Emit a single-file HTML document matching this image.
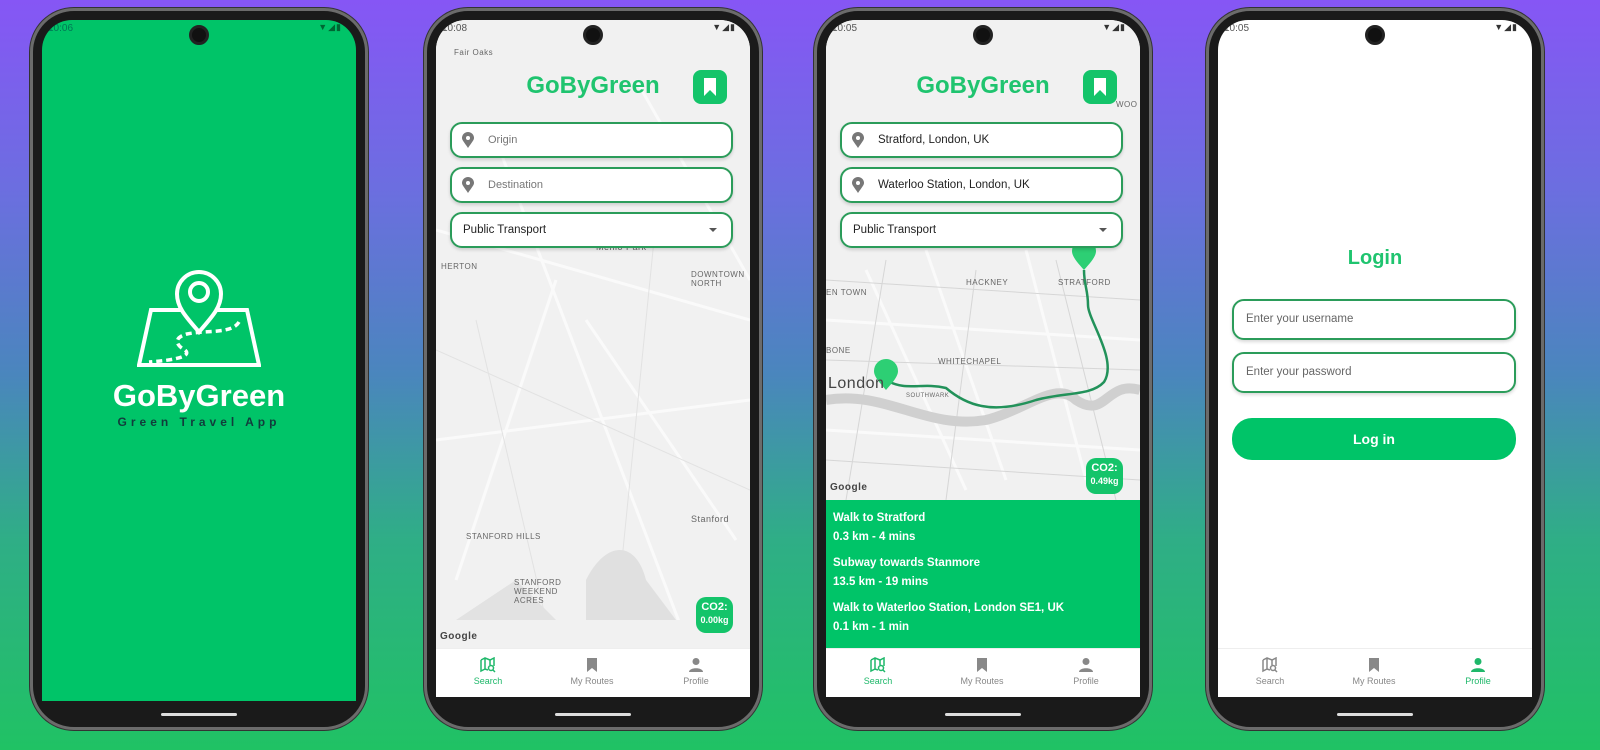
<!DOCTYPE html><html><head><style>
*{margin:0;padding:0;box-sizing:border-box}
body{width:1600px;height:750px;overflow:hidden;position:relative;font-family:"Liberation Sans",sans-serif;background:linear-gradient(180deg,#8656f5 0%,#6c6ee0 25%,#4a86bd 50%,#2fae86 72%,#20c264 100%)}
.a{position:absolute}
.phone{position:absolute;top:8px;width:338px;height:722px;border-radius:44px;background:#1a1a1a;border:3px solid #6b6b6b;box-shadow:0 0 0 1px #333}
.scr{position:absolute;left:9px;top:9px;right:9px;bottom:30px;border-radius:30px 30px 0 0;overflow:hidden;background:#fff}
.cam{position:absolute;top:14px;left:50%;margin-left:-10px;width:20px;height:20px;border-radius:50%;background:#111;border:3px solid #222}
.home{position:absolute;bottom:11px;left:50%;margin-left:-38px;width:76px;height:3px;border-radius:2px;background:#ddd}
.sb{position:absolute;top:3px;left:6px;font-size:10px;color:#555}
.sbr{position:absolute;top:2px;right:14px;font-size:9px;color:#333;letter-spacing:1px}
.title{position:absolute;left:0;right:0;text-align:center;color:#1fc46f;font-weight:bold;font-size:24px}
.bm{position:absolute;width:34px;height:34px;border-radius:8px;background:#14c46a}
.inp{position:absolute;left:14px;width:283px;height:36px;border:2px solid #2b9c5a;border-radius:12px;background:#fff;font-size:11px;color:#777;padding-left:36px;line-height:32px;box-shadow:0 2px 3px rgba(0,0,0,.15)}
.inp.d{color:#222;padding-left:11px;font-size:11.5px}
.pin{position:absolute;left:10px;top:8px;width:12px;height:16px}
.caret{position:absolute;right:14px;top:14px;border:4px solid transparent;border-top:4px solid #555}
.nav{position:absolute;left:0;right:0;bottom:0;height:49px;background:#fff;border-top:1px solid #eee}
.ni{position:absolute;top:8px;width:80px;text-align:center;font-size:9px;color:#888}
.ni svg{display:block;margin:0 auto 3px}
.co2{position:absolute;width:37px;height:36px;border-radius:10px;background:#14c46a;color:#fff;font-weight:bold;text-align:center;font-size:11px;line-height:13px;padding-top:4px}
.co2 small{font-size:9px}
.map{position:absolute;left:0;right:0;top:0;bottom:49px;background:#f1f1f1}
.ml{position:absolute;font-size:8px;color:#666;letter-spacing:.5px}
.gp{position:absolute;left:0;right:0;height:148px;bottom:49px;background:#00c468;color:#fff;font-weight:bold;font-size:11.5px;padding:9px 7px;line-height:19px}
</style></head><body>

<!-- Phone 1 -->
<div class="phone" style="left:30px">
 <div class="scr" style="background:#00c468;bottom:26px">
  <div class="sb" style="color:#075">10:06</div><div class="sbr" style="color:#063">▼◢▮</div>
  <svg class="a" style="left:95px;top:250px" width="124" height="100" viewBox="0 0 124 100">
   <path d="M14 40 L110 40 L122 95 L2 95 Z" fill="none" stroke="#fff" stroke-width="4"/>
   <path d="M62 62 C50 48 40 38 40 24 A22 22 0 0 1 84 24 C84 38 74 48 62 62Z" fill="#00c468" stroke="#fff" stroke-width="4"/>
   <circle cx="62" cy="22" r="9" fill="none" stroke="#fff" stroke-width="4"/>
   <path d="M102 52 C95 64 70 60 50 64 C35 68 40 76 48 80 C55 86 40 90 12 92" fill="none" stroke="#fff" stroke-width="3.5" stroke-dasharray="6 4"/>
  </svg>
  <div class="a" style="left:0;right:0;top:358px;text-align:center;color:#fff;font-weight:bold;font-size:31px">GoByGreen</div>
  <div class="a" style="left:0;right:0;top:395px;text-align:center;color:#123c3c;font-weight:bold;font-size:12px;letter-spacing:4px">Green Travel App</div>
 </div>
 <div class="cam"></div><div class="home"></div>
</div>

<!-- Phone 2 -->
<div class="phone" style="left:424px">
 <div class="scr">
  <div class="map">
   <svg class="a" style="left:0;top:0" width="314" height="600">
    <g stroke="#fafafa" stroke-width="3" fill="none"><path d="M0 210 L314 300"/><path d="M60 120 L250 620"/><path d="M200 60 L314 260"/><path d="M0 420 L314 380"/><path d="M120 260 L20 560"/><path d="M150 300 L300 520"/></g>
    <g stroke="#e2e2e2" stroke-width="1" fill="none"><path d="M0 330 L314 470"/><path d="M40 300 L110 600"/><path d="M220 200 L180 600"/></g>
    <path d="M150 560 C170 520 200 520 210 560 L240 600 L150 600 Z" fill="#e0e0e0"/>
    <path d="M20 600 L80 560 L120 600 Z" fill="#e2e2e2"/>
   </svg>
   <div class="ml" style="left:18px;top:28px">Fair Oaks</div>
   <div class="ml" style="left:160px;top:222px;font-size:9px">Menlo Park</div>
   <div class="ml" style="left:5px;top:242px">HERTON</div>
   <div class="ml" style="left:255px;top:250px">DOWNTOWN<br>NORTH</div>
   <div class="ml" style="left:30px;top:512px">STANFORD HILLS</div>
   <div class="ml" style="left:78px;top:558px">STANFORD<br>WEEKEND<br>ACRES</div>
   <div class="ml" style="left:255px;top:494px;font-size:9px">Stanford</div>
   <div class="ml" style="left:4px;top:611px;font-weight:bold;font-size:10px;color:#444">Google</div>
  </div>
  <div class="sb">10:08</div><div class="sbr">▼◢▮</div>
  <div class="title" style="top:52px">GoByGreen</div>
  <div class="bm" style="left:257px;top:50px"><svg width="34" height="34"><path d="M11 8 H23 V26 L17 20 L11 26Z" fill="#fff"/></svg></div>
  <div class="inp" style="top:102px"><svg class="pin" viewBox="0 0 12 16"><path d="M6 16 C2 10 0 8 0 6 A6 6 0 0 1 12 6 C12 8 10 10 6 16Z" fill="#777"/><circle cx="6" cy="6" r="2" fill="#fff"/></svg>Origin</div>
  <div class="inp" style="top:147px"><svg class="pin" viewBox="0 0 12 16"><path d="M6 16 C2 10 0 8 0 6 A6 6 0 0 1 12 6 C12 8 10 10 6 16Z" fill="#777"/><circle cx="6" cy="6" r="2" fill="#fff"/></svg>Destination</div>
  <div class="inp d" style="top:192px">Public Transport<div class="caret"></div></div>
  <div class="co2" style="left:260px;top:577px">CO2:<br><small>0.00kg</small></div>
  <div class="nav">
   <div class="ni" style="left:12px;color:#1fb86a"><svg width="16" height="16" viewBox="0 0 16 16"><path d="M1 3 L5 1 L10 3 L14 1 V9 M1 3 V14 L5 12 L8 13 M5 1 V12 M10 3 V8" fill="none" stroke="#1fb86a" stroke-width="1.5"/><circle cx="11" cy="11" r="2.5" fill="none" stroke="#1fb86a" stroke-width="1.5"/><path d="M13 13 L15 15" stroke="#1fb86a" stroke-width="1.5"/></svg>Search</div>
   <div class="ni" style="left:116px"><svg width="16" height="16"><path d="M3 1 H13 V15 L8 11 L3 15Z" fill="#888"/></svg>My Routes</div>
   <div class="ni" style="left:220px"><svg width="16" height="16"><circle cx="8" cy="4.5" r="3.5" fill="#888"/><path d="M1 15 C1 10 15 10 15 15Z" fill="#888"/></svg>Profile</div>
  </div>
 </div>
 <div class="cam"></div><div class="home"></div>
</div>

<!-- Phone 3 -->
<div class="phone" style="left:814px">
 <div class="scr">
  <div class="map">
   <svg class="a" style="left:0;top:0" width="314" height="600">
    <g stroke="#fafafa" stroke-width="3" fill="none"><path d="M0 300 L314 320"/><path d="M100 230 L180 460"/><path d="M0 410 L314 430"/><path d="M200 230 L260 460"/><path d="M40 250 L140 470"/></g>
    <g stroke="#d6d6d6" stroke-width="1" fill="none"><path d="M0 260 L314 280"/><path d="M60 240 L20 480"/><path d="M150 250 L120 480"/><path d="M230 240 L290 480"/><path d="M0 440 L314 460"/><path d="M0 340 L314 350"/></g>
    <path d="M0 380 C60 370 100 410 160 400 C200 390 230 360 250 380 C280 400 280 360 314 370" stroke="#d0d0d0" stroke-width="10" fill="none"/>
    <path d="M60 360 C80 372 95 362 120 368 C140 385 165 395 210 380 C240 372 265 376 278 362 C292 340 262 300 262 285 C262 270 258 265 258 250" stroke="#22925a" stroke-width="2.5" fill="none"/>
    <path d="M258 250 C252 243 246 237 246 231 A12 12 0 0 1 270 231 C270 237 264 243 258 250Z" fill="#2dcf74"/>
    <path d="M60 370 C54 363 48 357 48 351 A12 12 0 0 1 72 351 C72 357 66 363 60 370Z" fill="#2dcf74"/>
   </svg>
   <div class="ml" style="left:140px;top:258px">HACKNEY</div>
   <div class="ml" style="left:232px;top:258px">STRATFORD</div>
   <div class="ml" style="left:0;top:268px">EN TOWN</div>
   <div class="ml" style="left:0;top:326px">BONE</div>
   <div class="ml" style="left:112px;top:337px">WHITECHAPEL</div>
   <div class="ml" style="left:2px;top:355px;font-size:16px;color:#444">London</div>
   <div class="ml" style="left:80px;top:373px;font-size:6px">SOUTHWARK</div>
   <div class="ml" style="left:290px;top:80px">WOO</div>
   <div class="ml" style="left:4px;top:462px;font-weight:bold;font-size:10px;color:#444">Google</div>
  </div>
  <div class="sb">10:05</div><div class="sbr">▼◢▮</div>
  <div class="title" style="top:52px">GoByGreen</div>
  <div class="bm" style="left:257px;top:50px"><svg width="34" height="34"><path d="M11 8 H23 V26 L17 20 L11 26Z" fill="#fff"/></svg></div>
  <div class="inp d" style="top:102px;padding-left:36px"><svg class="pin" viewBox="0 0 12 16"><path d="M6 16 C2 10 0 8 0 6 A6 6 0 0 1 12 6 C12 8 10 10 6 16Z" fill="#777"/><circle cx="6" cy="6" r="2" fill="#fff"/></svg>Stratford, London, UK</div>
  <div class="inp d" style="top:147px;padding-left:36px"><svg class="pin" viewBox="0 0 12 16"><path d="M6 16 C2 10 0 8 0 6 A6 6 0 0 1 12 6 C12 8 10 10 6 16Z" fill="#777"/><circle cx="6" cy="6" r="2" fill="#fff"/></svg>Waterloo Station, London, UK</div>
  <div class="inp d" style="top:192px">Public Transport<div class="caret"></div></div>
  <div class="co2" style="left:260px;top:438px">CO2:<br><small>0.49kg</small></div>
  <div class="gp">Walk to Stratford<br>0.3 km - 4 mins<div style="height:7px"></div>Subway towards Stanmore<br>13.5 km - 19 mins<div style="height:7px"></div>Walk to Waterloo Station, London SE1, UK<br>0.1 km - 1 min</div>
  <div class="nav">
   <div class="ni" style="left:12px;color:#1fb86a"><svg width="16" height="16" viewBox="0 0 16 16"><path d="M1 3 L5 1 L10 3 L14 1 V9 M1 3 V14 L5 12 L8 13 M5 1 V12 M10 3 V8" fill="none" stroke="#1fb86a" stroke-width="1.5"/><circle cx="11" cy="11" r="2.5" fill="none" stroke="#1fb86a" stroke-width="1.5"/><path d="M13 13 L15 15" stroke="#1fb86a" stroke-width="1.5"/></svg>Search</div>
   <div class="ni" style="left:116px"><svg width="16" height="16"><path d="M3 1 H13 V15 L8 11 L3 15Z" fill="#888"/></svg>My Routes</div>
   <div class="ni" style="left:220px"><svg width="16" height="16"><circle cx="8" cy="4.5" r="3.5" fill="#888"/><path d="M1 15 C1 10 15 10 15 15Z" fill="#888"/></svg>Profile</div>
  </div>
 </div>
 <div class="cam"></div><div class="home"></div>
</div>

<!-- Phone 4 -->
<div class="phone" style="left:1206px">
 <div class="scr">
  <div class="sb">10:05</div><div class="sbr">▼◢▮</div>
  <div class="title" style="top:227px;font-size:20px">Login</div>
  <div class="inp" style="top:279px;left:14px;width:284px;height:41px;padding-left:12px;line-height:37px;color:#666;font-size:11.5px">Enter your username</div>
  <div class="inp" style="top:332px;left:14px;width:284px;height:41px;padding-left:12px;line-height:37px;color:#666;font-size:11.5px">Enter your password</div>
  <div class="a" style="left:14px;width:284px;top:398px;height:42px;border-radius:20px;background:#00c468;color:#fff;font-weight:bold;font-size:14px;text-align:center;line-height:42px">Log in</div>
  <div class="nav">
   <div class="ni" style="left:12px"><svg width="16" height="16" viewBox="0 0 16 16"><path d="M1 3 L5 1 L10 3 L14 1 V9 M1 3 V14 L5 12 L8 13 M5 1 V12 M10 3 V8" fill="none" stroke="#888" stroke-width="1.5"/><circle cx="11" cy="11" r="2.5" fill="none" stroke="#888" stroke-width="1.5"/><path d="M13 13 L15 15" stroke="#888" stroke-width="1.5"/></svg>Search</div>
   <div class="ni" style="left:116px"><svg width="16" height="16"><path d="M3 1 H13 V15 L8 11 L3 15Z" fill="#888"/></svg>My Routes</div>
   <div class="ni" style="left:220px;color:#1fb86a"><svg width="16" height="16"><circle cx="8" cy="4.5" r="3.5" fill="#1fb86a"/><path d="M1 15 C1 10 15 10 15 15Z" fill="#1fb86a"/></svg>Profile</div>
  </div>
 </div>
 <div class="cam"></div><div class="home"></div>
</div>
</body></html>
